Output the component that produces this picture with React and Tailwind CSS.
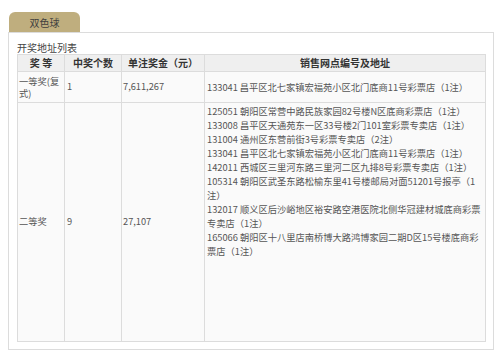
import React from "react";

// prize rows for the 双色球 draw, addresses listed per winning shop
const secondPrizeShops = [
  ["125051", "朝阳区常营中路民族家园82号楼N区底商彩票店（1注）"],
  ["133008", "昌平区天通苑东一区33号楼2门101室彩票专卖店（1注）"],
  ["131004", "通州区东营前街3号彩票专卖店（2注）"],
  ["133041", "昌平区北七家镇宏福苑小区北门底商11号彩票店（1注）"],
  ["142011", "西城区三里河东路三里河二区九排8号彩票专卖店（1注）"],
  ["105314", "朝阳区武圣东路松榆东里41号楼邮局对面51201号报亭（1注）"],
  ["132017", "顺义区后沙峪地区裕安路空港医院北侧华冠建材城底商彩票专卖店（1注）"],
  ["165066", "朝阳区十八里店南桥博大路鸿博家园二期D区15号楼底商彩票店（1注）"],
];

function HeadCell({ children }) {
  return (
    <th className="border border-[#dcdcdc] bg-[#efefef] text-center text-[10px] font-bold text-[#333] leading-[16px] p-0">
      {children}
    </th>
  );
}

export default function App() {
  return (
    <div className="w-[500px] h-[355px] bg-white pt-[12px] pl-[8px] font-['Noto_Sans_CJK_SC',sans-serif] text-[#555]">
      <div className="ml-[1px] w-[71px] h-[20px] rounded-t-[6px] bg-[#bfae7e] flex items-center justify-center text-[10px] text-[#3f3f3f]">
        双色球
      </div>
      <div className="w-[486px] h-[318px] border border-[#dcdcdc] pl-[8px] pt-[8px]">
        <div className="text-[10px] leading-[13px] text-[#444]">开奖地址列表</div>
        <table className="w-[468px] table-fixed border-collapse bg-[#fafafa] text-[9.25px]">
          <colgroup>
            <col className="w-[47px]" />
            <col className="w-[57px]" />
            <col className="w-[83px]" />
            <col className="w-[281px]" />
          </colgroup>
          <thead>
            <tr className="h-[17px]">
              <HeadCell>奖 等</HeadCell>
              <HeadCell>中奖个数</HeadCell>
              <HeadCell>单注奖金（元）</HeadCell>
              <HeadCell>销售网点编号及地址</HeadCell>
            </tr>
          </thead>
          <tbody>
            <tr className="h-[31px]">
              <td className="border border-[#dcdcdc] align-middle px-[1px] leading-[12px]">一等奖(复式)</td>
              <td className="border border-[#dcdcdc] align-middle px-[2px]">1</td>
              <td className="border border-[#dcdcdc] align-middle px-[1px]">7,611,267</td>
              <td className="border border-[#dcdcdc] align-middle px-[2px] leading-[14px]">
                133041 昌平区北七家镇宏福苑小区北门底商11号彩票店（1注）
              </td>
            </tr>
            <tr className="h-[239px]">
              <td className="border border-[#dcdcdc] align-middle px-[1px]">二等奖</td>
              <td className="border border-[#dcdcdc] align-middle px-[2px]">9</td>
              <td className="border border-[#dcdcdc] align-middle px-[1px]">27,107</td>
              <td className="border border-[#dcdcdc] align-top px-[2px] pt-[1px] leading-[14px]">
                {secondPrizeShops.map(([code, addr]) => (
                  <div key={code}>
                    {code} {addr}
                  </div>
                ))}
              </td>
            </tr>
          </tbody>
        </table>
      </div>
    </div>
  );
}
